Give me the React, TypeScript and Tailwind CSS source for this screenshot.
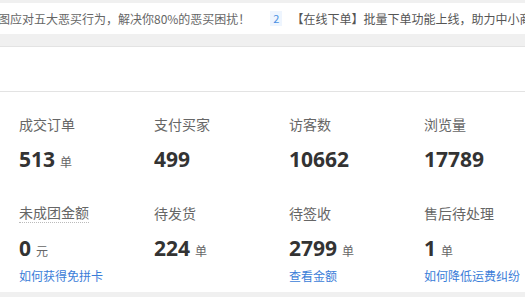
import React from "react"

type Stat = {
    label: string
    value: string
    unit?: string
    link?: string
    dotted?: boolean
}

const topRow: Stat[] = [
    { label: "成交订单", value: "513", unit: "单" },
    { label: "支付买家", value: "499" },
    { label: "访客数", value: "10662" },
    { label: "浏览量", value: "17789" },
]

const bottomRow: Stat[] = [
    { label: "未成团金额", value: "0", unit: "元", link: "如何获得免拼卡", dotted: true },
    { label: "待发货", value: "224", unit: "单" },
    { label: "待签收", value: "2799", unit: "单", link: "查看金额" },
    { label: "售后待处理", value: "1", unit: "单", link: "如何降低运费纠纷" },
]

const StatCell = ({ item }: { item: Stat }) => {
    return (
        <div className="w-[135px] shrink-0 flex flex-col">
            <div className="h-5 flex items-center">
                <span
                    className={`text-[14px] leading-5 text-[#666] ${item.dotted ? "border-b border-dotted border-[#bbb] leading-[19px]" : ""}`}
                >
                    {item.label}
                </span>
            </div>
            <div className="mt-[10px] h-[30px] flex items-baseline">
                <span className="font-['Open_Sans','Noto_Sans_CJK_SC',sans-serif] text-[21px] leading-[30px] font-bold text-[#333]">
                    {item.value}
                </span>
                {item.unit && <span className="ml-[5px] text-[12px] text-[#666]">{item.unit}</span>}
            </div>
            {item.link && (
                <a className="mt-[5px] text-[12px] leading-4 text-[#3b7dd8] cursor-pointer">{item.link}</a>
            )}
        </div>
    )
}

export default function App() {
    return (
        <div className="w-[525px] h-[297px] overflow-hidden bg-[#f0f0f0] font-['Noto_Sans_CJK_SC','Liberation_Sans',sans-serif]">
            {/* notice bar */}
            <div className="mt-[3px] h-[31px] bg-white flex items-center whitespace-nowrap overflow-hidden">
                <span className="ml-[-2px] text-[12px] text-[#666]">图应对五大恶买行为，解决你80%的恶买困扰！</span>
                <span className="ml-[20px] w-3 h-[15px] bg-[#eef5fe] text-[#4a90e2] text-[11px] flex items-center justify-center shrink-0">
                    2
                </span>
                <span className="ml-[9px] text-[12px] text-[#555]">【在线下单】批量下单功能上线，助力中小商</span>
            </div>

            <div className="mt-[12px] h-[46px] bg-white border-y border-[#e3e3e3]" />

            {/* stats */}
            <div className="h-[200px] bg-white pl-[19px] pt-[22px] flex flex-col">
                <div className="flex">
                    {topRow.map((item, index) => (
                        <StatCell key={index} item={item} />
                    ))}
                </div>
                <div className="flex mt-[29px]">
                    {bottomRow.map((item, index) => (
                        <StatCell key={index} item={item} />
                    ))}
                </div>
            </div>
        </div>
    )
}
